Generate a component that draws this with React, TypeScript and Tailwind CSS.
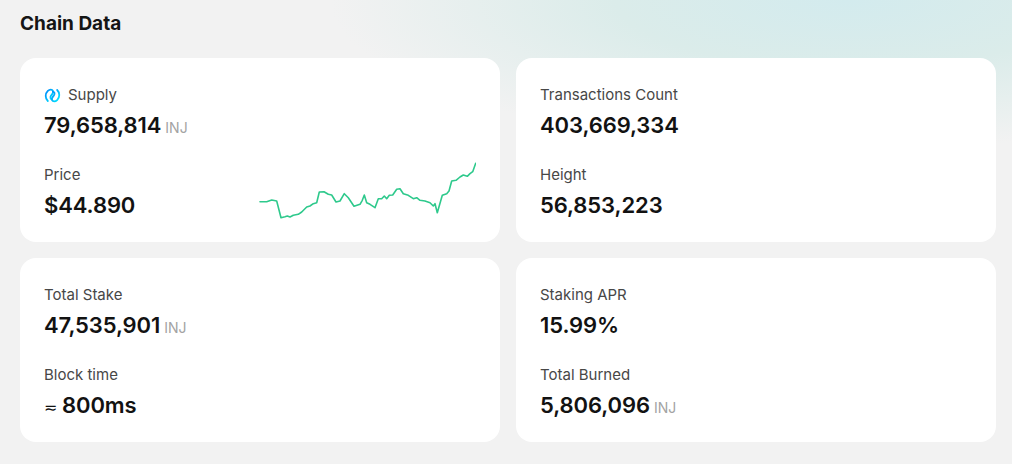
import React from "react"

const sparkPoints = [
  [260, 200.7], [266.7, 200.7], [271.7, 199], [276.7, 200], [281, 216.7], [285, 215.7],
  [287.3, 215], [290, 216], [293.3, 214.3], [298.3, 213.3], [301.7, 211], [306.7, 206],
  [310, 205], [313.3, 202.7], [316.7, 201.7], [319.3, 191], [324, 190.7], [328.3, 193.3],
  [331.7, 194], [336, 201], [340, 200], [344.3, 192.7], [348.3, 196.7], [354, 205.3],
  [360, 203.3], [362.3, 199.3], [364.3, 194], [366.7, 201.7], [370, 203.3], [375, 206.7],
  [378.3, 197.7], [381.7, 197.7], [384.3, 195], [386.7, 197.7], [389.3, 194.3], [392.7, 194],
  [396.7, 188.3], [400, 187.7], [403.3, 192.7], [408.3, 194.3], [413.3, 197.7], [416.7, 196.7],
  [420, 199.3], [425, 200], [430, 201.7], [433.3, 205], [435, 202.7], [437.3, 211.7],
  [442.3, 194.3], [446.7, 192.7], [449, 190], [451.7, 180], [456, 179.3], [460, 176],
  [463.3, 174], [467.3, 175.3], [470, 172.7], [472.7, 170.7], [475.7, 162.3],
]

function Sparkline() {
  // coordinates were read off the page, shift them into the svg box
  const pts = sparkPoints.map(([x, y]) => `${(x - 256).toFixed(1)},${(y - 159).toFixed(1)}`).join(" ")
  return (
    <svg width="220" height="60" viewBox="0 0 220 60" className="block">
      <polyline points={pts} fill="none" stroke="#2ec98c" strokeWidth="1.6" strokeLinejoin="round" strokeLinecap="round" />
    </svg>
  )
}

function InjLogo() {
  return (
    <svg width="17" height="17" viewBox="0 0 20 20" className="mr-[7px]">
      <defs>
        <linearGradient id="inj" x1="0" y1="0" x2="1" y2="1">
          <stop offset="0" stopColor="#0082fa" />
          <stop offset="1" stopColor="#00f2fe" />
        </linearGradient>
      </defs>
      <path
        d="M4.5 16.5C1.2 13.4 1.2 7.8 4.5 4.6 6.8 2.4 9.6 2.6 10.6 4.6 11.6 6.6 9.4 8.6 8.2 10.4 7 12.2 7.6 14.6 9.6 14.2"
        fill="none"
        stroke="url(#inj)"
        strokeWidth="2.1"
        strokeLinecap="round"
      />
      <path
        d="M15.5 3.5C18.8 6.6 18.8 12.2 15.5 15.4 13.2 17.6 10.4 17.4 9.4 15.4 8.4 13.4 10.6 11.4 11.8 9.6 13 7.8 12.4 5.4 10.4 5.8"
        fill="none"
        stroke="url(#inj)"
        strokeWidth="2.1"
        strokeLinecap="round"
      />
    </svg>
  )
}

function Stat({ label, value, unit, icon, prefix, first }: {
  label: string
  value: string
  unit?: string
  icon?: React.ReactNode
  prefix?: string
  first?: boolean
}) {
  return (
    <div className={first ? "" : "mt-6"}>
      <div className="flex h-5 items-center text-[15px] leading-5 text-[#474747]">
        {icon}
        {label}
      </div>
      <div className="mt-2 h-7 whitespace-nowrap leading-7 text-[#121212]">
        {prefix && <span className="mr-[5px] text-[16px] leading-none font-normal">{prefix}</span>}
        <span className="text-[22px] leading-none font-semibold tracking-[-0.1px]">{value}</span>
        {unit && <span className="ml-1 text-[14px] leading-none text-[#a3a3a3]">{unit}</span>}
      </div>
    </div>
  )
}

function Card({ children }: { children: React.ReactNode }) {
  return <div className="flex h-[184px] rounded-2xl bg-white px-6 pt-[27px]">{children}</div>
}

export default function App() {
  return (
    <div
      className="min-h-[464px] w-full bg-[#f2f2f2] bg-[radial-gradient(ellipse_520px_150px_at_850px_0px,#d3ebee_0%,#dbecea_45%,rgba(242,242,242,0)_100%)] px-5 pt-[10px]"
      style={{ fontFamily: "Inter, 'Noto Sans', sans-serif" }}
    >
      <h2 className="text-[19px] font-bold leading-7 text-[#151515]">Chain Data</h2>
      <div className="mt-5 grid w-[976px] grid-cols-2 gap-x-4 gap-y-4">
        <Card>
          <div className="flex-1">
            <Stat first label="Supply" value="79,658,814" unit="INJ" icon={<InjLogo />} />
            <Stat label="Price" value="$44.890" />
          </div>
          <div className="self-end pb-[22px]">
            <Sparkline />
          </div>
        </Card>
        <Card>
          <div>
            <Stat first label="Transactions Count" value="403,669,334" />
            <Stat label="Height" value="56,853,223" />
          </div>
        </Card>
        <Card>
          <div>
            <Stat first label="Total Stake" value="47,535,901" unit="INJ" />
            <Stat label="Block time" value="800ms" prefix="≂" />
          </div>
        </Card>
        <Card>
          <div>
            <Stat first label="Staking APR" value="15.99%" />
            <Stat label="Total Burned" value="5,806,096" unit="INJ" />
          </div>
        </Card>
      </div>
    </div>
  )
}
